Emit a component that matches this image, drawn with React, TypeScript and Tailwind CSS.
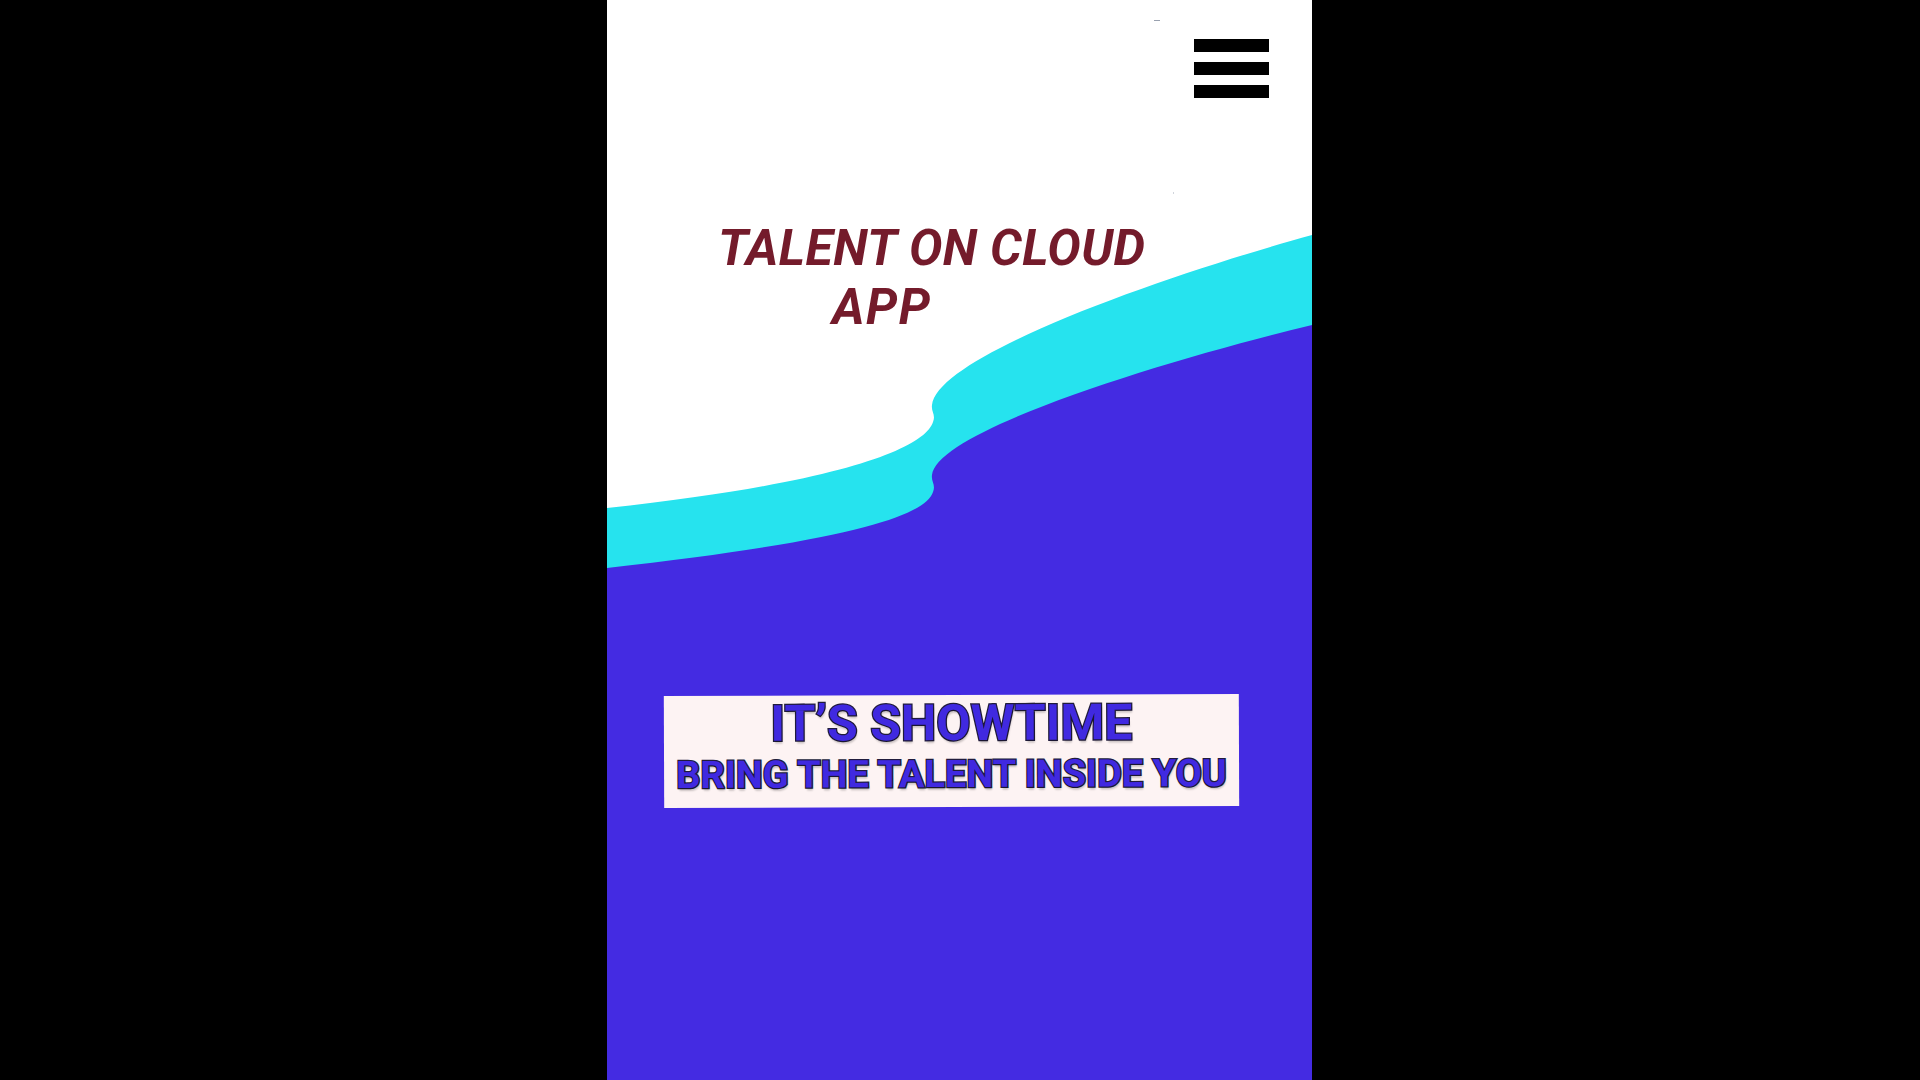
import React from "react";

function Waves() {
  return (
    <svg
      className="absolute inset-0 h-full w-full"
      viewBox="0 0 705 1080"
      preserveAspectRatio="none"
      aria-hidden="true"
    >
      <path
        d="M705,235 C560,275 330,355 325,405 C324,412 329,415 326,422 C318,447 240,482 0,508 L0,1080 L705,1080 Z"
        fill="#26E3EE"
      />
      <path
        d="M705,325 C560,360 330,430 325,475 C324,482 329,485 326,492 C318,515 250,540 0,568 L0,1080 L705,1080 Z"
        fill="#442BE2"
      />
    </svg>
  );
}

export default function App() {
  const outline =
    "[-webkit-text-stroke:2.5px_#211c3c] [paint-order:stroke_fill] [text-shadow:1px_3px_2px_rgba(0,0,0,0.2)]";
  return (
    <div className="w-[1920px] h-[1080px] bg-black pl-[607px] overflow-hidden">
      <div className="relative w-[705px] h-[1080px] bg-white overflow-hidden">
        <Waves />
        <span className="absolute left-[547px] top-[20px] h-px w-[6px] bg-gray-400" />
        <span className="absolute left-[566px] top-[192px] h-[2px] w-px bg-gray-300" />
        <div className="relative flex flex-col">
          <div className="flex justify-end pt-[39px] pr-[43px]">
            <div className="flex flex-col gap-[10px]">
              <div className="h-[13px] w-[75px] bg-black" />
              <div className="h-[13px] w-[75px] bg-black" />
              <div className="h-[13px] w-[75px] bg-black" />
            </div>
          </div>
          <div className="mt-[121px] font-['Roboto',sans-serif] italic font-bold text-[50px] leading-[59px] tracking-[0.4px] text-[#741B2B]">
            <div className="pl-[111px]">TALENT ON CLOUD</div>
            <div className="pl-[225px] tracking-[1.5px]">APP</div>
          </div>
          <div className="mt-[358px] ml-[57px] w-[575px] h-[112px] bg-[#FDF3F3] -rotate-[0.2deg] pt-[3px] font-['Roboto',sans-serif] font-bold text-center text-[#4029E0]">
            <div className={`text-[50px] leading-[50px] ${outline}`}>IT’S SHOWTIME</div>
            <div className={`mt-[7px] text-[38px] leading-[38px] ${outline}`}>
              BRING THE TALENT INSIDE YOU
            </div>
          </div>
        </div>
      </div>
    </div>
  );
}
